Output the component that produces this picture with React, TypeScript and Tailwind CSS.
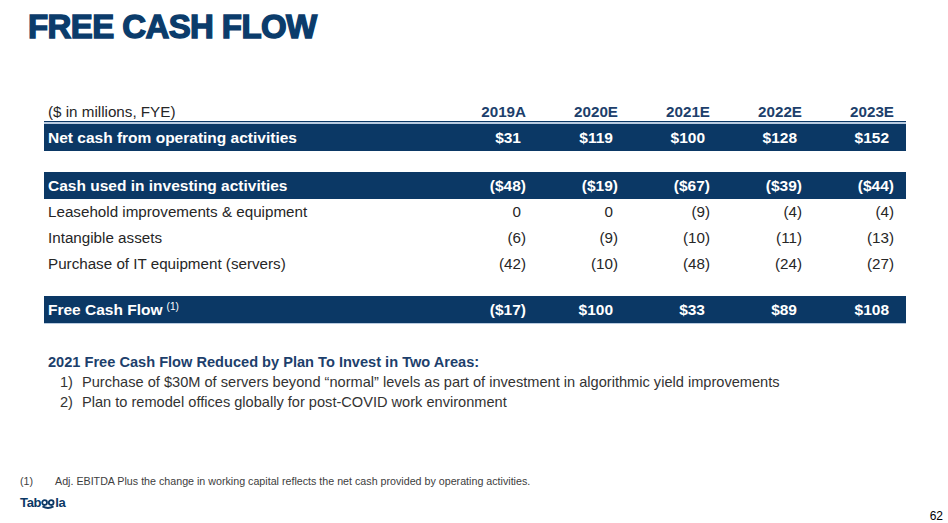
const years = ['2019A', '2020E', '2021E', '2022E', '2023E'];

type Row = { label: string; values: string[]; kind: 'bar' | 'plain'; sup?: string };

const netCash: Row = { label: 'Net cash from operating activities', values: ['$31', '$119', '$100', '$128', '$152'], kind: 'bar' };
const investing: Row = { label: 'Cash used in investing activities', values: ['($48)', '($19)', '($67)', '($39)', '($44)'], kind: 'bar' };
const details: Row[] = [
  { label: 'Leasehold improvements & equipment', values: ['0', '0', '(9)', '(4)', '(4)'], kind: 'plain' },
  { label: 'Intangible assets', values: ['(6)', '(9)', '(10)', '(11)', '(13)'], kind: 'plain' },
  { label: 'Purchase of IT equipment (servers)', values: ['(42)', '(10)', '(48)', '(24)', '(27)'], kind: 'plain' },
];
const fcf: Row = { label: 'Free Cash Flow', sup: '(1)', values: ['($17)', '$100', '$33', '$89', '$108'], kind: 'bar' };

// values without a closing paren get a small right inset so digits line up
function Cell({ v }: { v: string }) {
  const closes = v.endsWith(')');
  return <div className={`w-[92px] text-right ${closes ? '' : 'pr-[5px]'}`}>{v}</div>;
}

function TableRow({ row }: { row: Row }) {
  const bar = row.kind === 'bar';
  return (
    <div
      className={
        bar
          ? 'flex h-[27px] items-center bg-[#0b3865] pr-[12px] text-[15.5px] font-bold text-white'
          : 'flex h-[26px] items-center pr-[12px] text-[#262626]'
      }
    >
      <div className="flex-1 pl-[4px]">
        {row.label}
        {row.sup && <sup className="ml-[4px] text-[10px] font-normal">{row.sup}</sup>}
      </div>
      {row.values.map((v, i) => (
        <Cell key={i} v={v} />
      ))}
    </div>
  );
}

function TaboolaLogo() {
  return (
    <div className="flex items-end text-[13px] font-bold leading-[14px] tracking-[-0.3px] text-[#0b3865]">
      <span>Tab</span>
      <svg width="14" height="10" viewBox="0 0 14 10" className="mb-[1px]">
        <circle cx="3.6" cy="3.6" r="2.4" fill="none" stroke="#0b3865" strokeWidth="1.8" />
        <circle cx="10.2" cy="3.6" r="2.4" fill="none" stroke="#0b3865" strokeWidth="1.8" />
        <path d="M1.5 7.4 Q7 10.6 12.5 7.4" fill="none" stroke="#0b3865" strokeWidth="1.8" />
      </svg>
      <span>la</span>
    </div>
  );
}

export default function App() {
  return (
    <div className="flex h-[523px] w-[948px] flex-col overflow-hidden bg-white font-['Liberation_Sans',Arial,sans-serif]">
      <h1 className="pl-[28px] pt-[10px] text-[33px] font-bold leading-[33px] tracking-[-0.6px] text-[#0b3c6b] [-webkit-text-stroke:1.4px_#0b3c6b]">
        FREE CASH FLOW
      </h1>

      <div className="ml-[44px] mt-[60px] w-[862px] text-[15.2px]">
        <div className="flex h-[18px] items-start pr-[12px] leading-[18px]">
          <div className="flex-1 pl-[4px] text-[#262626]">($ in millions, FYE)</div>
          {years.map((y) => (
            <div key={y} className="w-[92px] text-right font-bold text-[#1d3f6c]">
              {y}
            </div>
          ))}
        </div>
        <div className="h-[1px] bg-[#0b3865]" />
        <div className="h-[2px] bg-[#b9cbe0]" />

        <TableRow row={netCash} />
        <div className="h-[21px]" />
        <TableRow row={investing} />
        {details.map((r) => (
          <TableRow key={r.label} row={r} />
        ))}
        <div className="h-[19px]" />
        <TableRow row={fcf} />
        <div className="h-[1px] bg-[#b9cbe0]" />
      </div>

      <div className="ml-[48px] mt-[28px] text-[14.6px] leading-[20px]">
        <p className="font-bold text-[#1d3f6c]">2021 Free Cash Flow Reduced by Plan To Invest in Two Areas:</p>
        <ol className="text-[#333333]">
          <li className="flex">
            <span className="w-[34px] pl-[12px]">1)</span>
            <span>Purchase of $30M of servers beyond “normal” levels as part of investment in algorithmic yield improvements</span>
          </li>
          <li className="flex">
            <span className="w-[34px] pl-[12px]">2)</span>
            <span>Plan to remodel offices globally for post-COVID work environment</span>
          </li>
        </ol>
      </div>

      <div className="mt-auto px-[20px]">
        <div className="flex text-[10.7px] leading-[14px] text-[#404040]">
          <span className="w-[35px]">(1)</span>
          <span>Adj. EBITDA Plus the change in working capital reflects the net cash provided by operating activities.</span>
        </div>
        <div className="mt-[8px] flex items-start justify-between">
          <TaboolaLogo />
          <span className="mr-[-15px] mt-[13px] text-[12px] leading-[14px] text-black">62</span>
        </div>
      </div>
    </div>
  );
}
